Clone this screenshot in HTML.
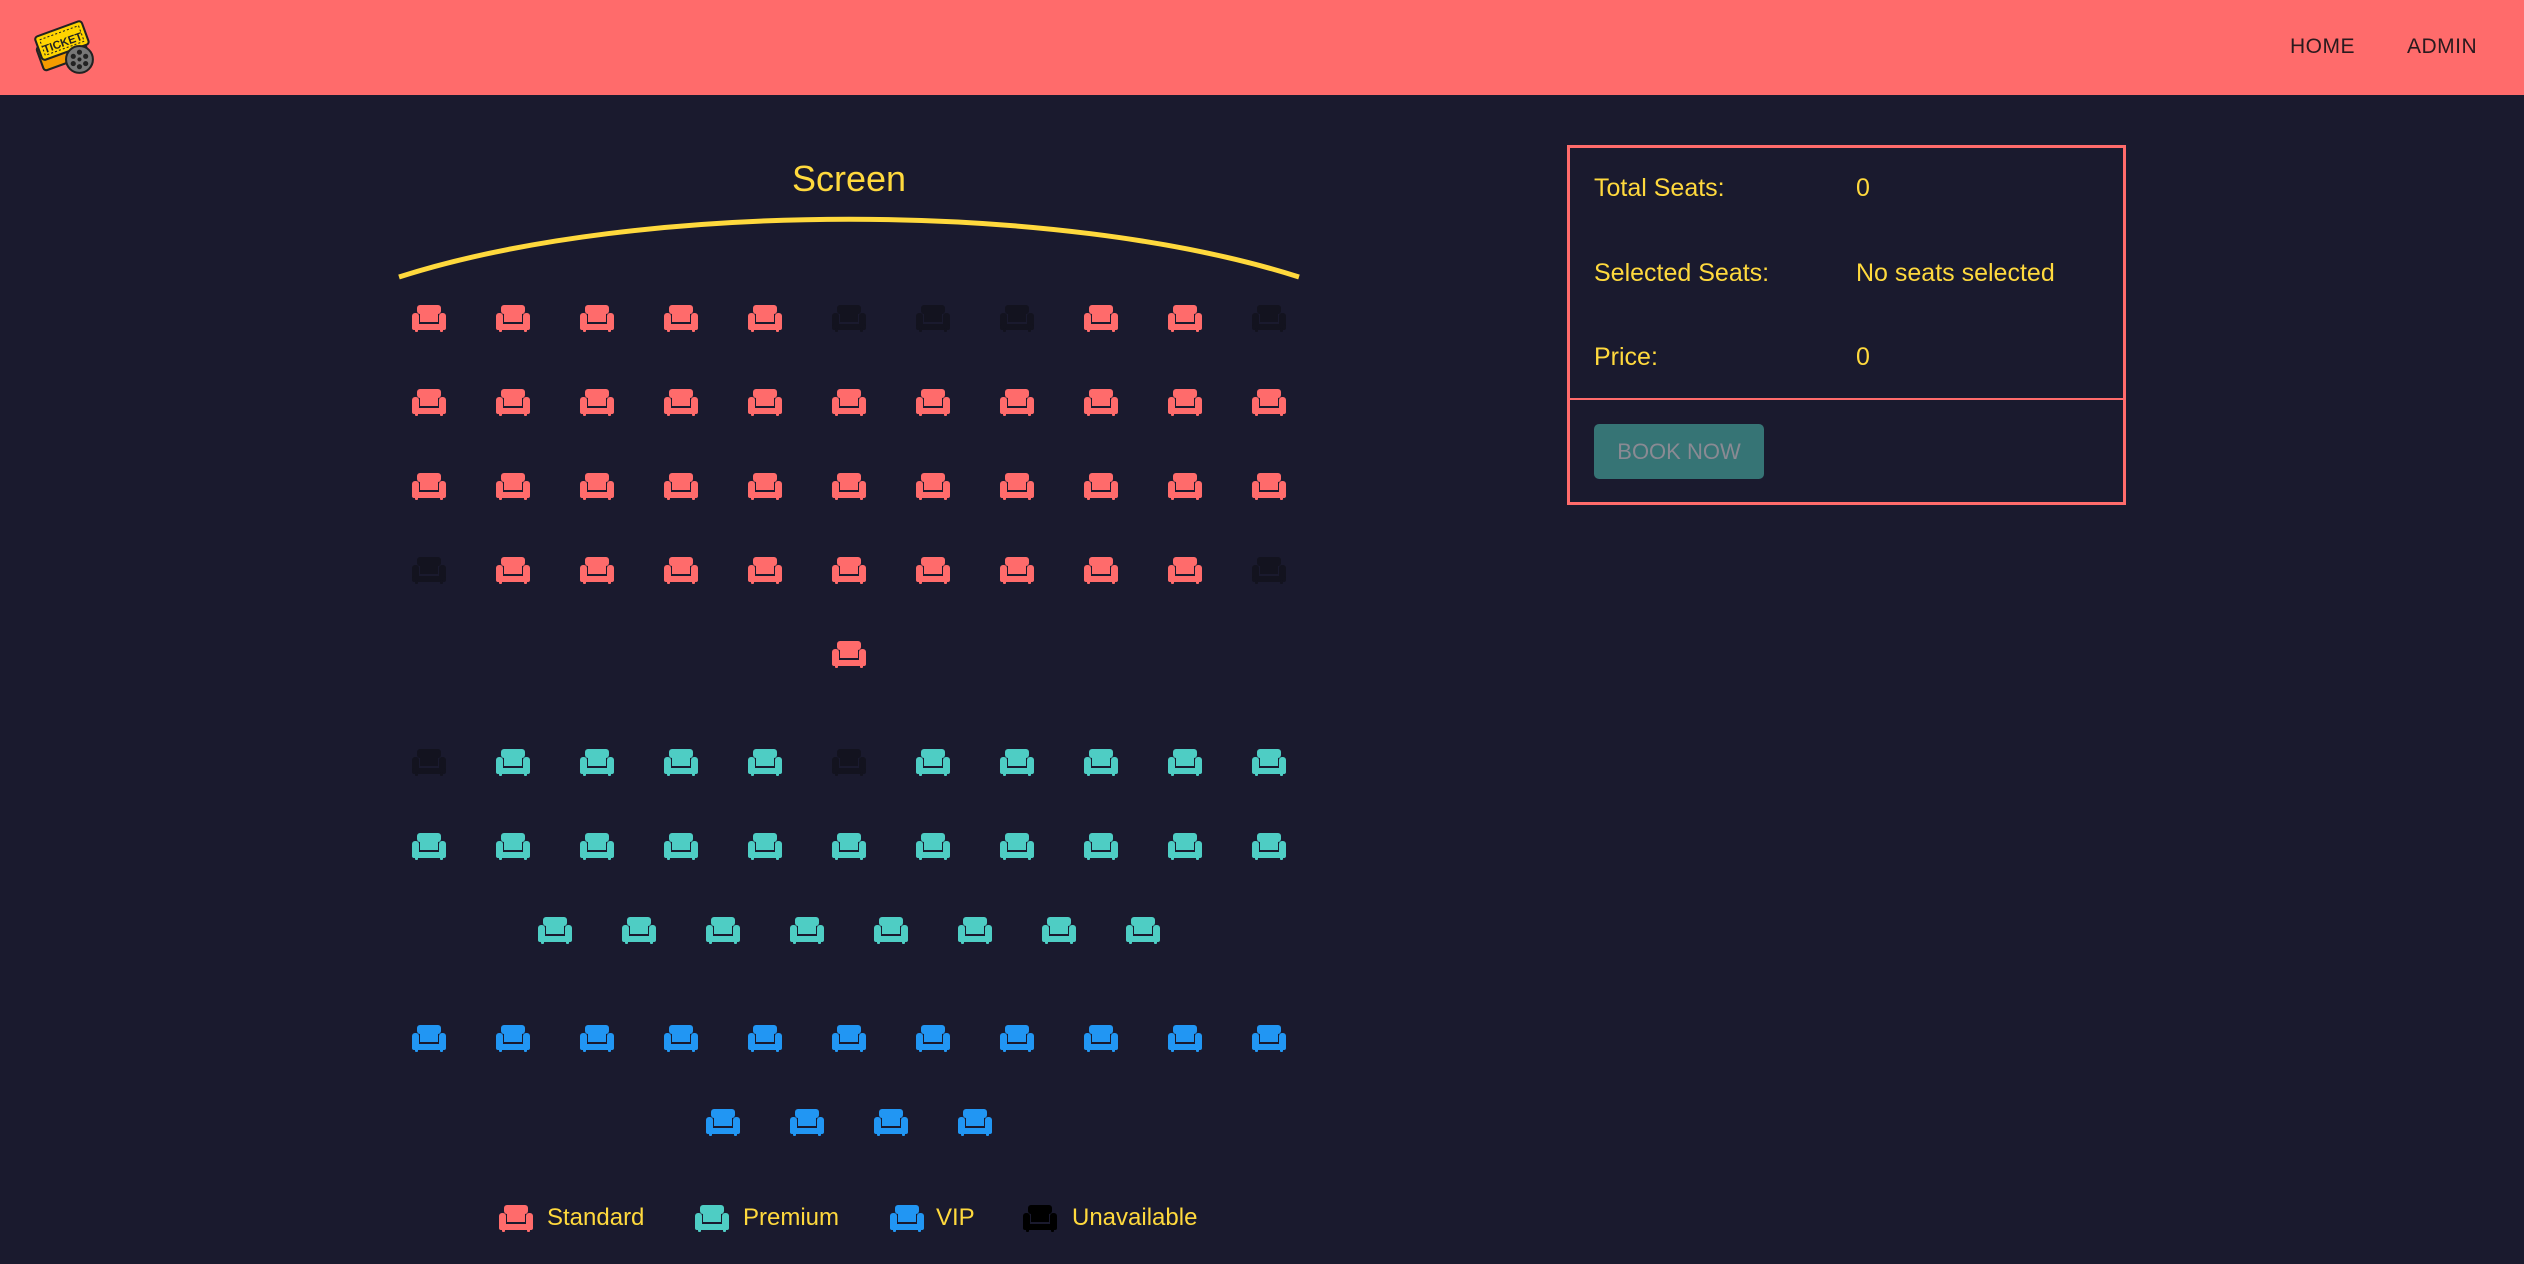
<!DOCTYPE html>
<html><head><meta charset="utf-8"><style>
*{margin:0;padding:0;box-sizing:border-box}
body{width:2524px;height:1264px;background:#1a1a2e;font-family:"Liberation Sans",Arial,sans-serif;position:relative;overflow:hidden}
.hdr{position:absolute;left:0;top:0;width:2524px;height:95px;background:#ff6b6b}
.nav{position:absolute;top:35px;font-size:21px;color:#2a1a1e;letter-spacing:0.5px}
.s{position:absolute;width:34px;height:27px}
.t{position:absolute;color:#ffd93d;font-size:24px;line-height:28px}
.p{font-size:25px}
.panel{position:absolute;left:1567px;top:145px;width:559px;height:360px;border:3px solid #ff6b6b}
.btn{position:absolute;left:1594px;top:424px;width:170px;height:55px;background:#367475;border-radius:5px;color:#8a8a93;font-size:22px;text-align:center;line-height:55px}
</style></head><body>
<svg width="0" height="0" style="position:absolute">
<symbol id="c" viewBox="0 0 34 27">
<rect x="5" y="0" width="24" height="9" rx="3"/>
<rect x="8" y="7" width="18" height="10"/>
<rect x="0" y="8" width="7" height="17" rx="3"/>
<rect x="27" y="8" width="7" height="17" rx="3"/>
<rect x="0" y="19" width="34" height="6" rx="2"/>
<rect x="3" y="23" width="3" height="4" rx="1"/>
<rect x="28" y="23" width="3" height="4" rx="1"/>
</symbol>
</svg>
<div class="hdr"></div>
<svg style="position:absolute;left:34px;top:15px" width="62" height="62" viewBox="0 0 60 60">
<g transform="rotate(-20 30 30)">
<rect x="3" y="22" width="46" height="24" rx="3" fill="#f59b00" stroke="#222" stroke-width="2"/>
<rect x="5" y="12" width="48" height="24" rx="3" fill="#ffd400" stroke="#222" stroke-width="2"/>
<rect x="9" y="16" width="40" height="16" fill="none" stroke="#222" stroke-width="1" stroke-dasharray="2 2"/>
<text x="29" y="30" font-size="11" font-weight="bold" text-anchor="middle" font-family="Liberation Sans" fill="#222">TICKET</text>
</g>
<circle cx="44" cy="43" r="13" fill="#777" stroke="#222" stroke-width="2"/>
<circle cx="44" cy="36" r="2.5" fill="#222"/><circle cx="44" cy="50" r="2.5" fill="#222"/>
<circle cx="38" cy="40" r="2.5" fill="#222"/><circle cx="50" cy="40" r="2.5" fill="#222"/>
<circle cx="38" cy="47" r="2.5" fill="#222"/><circle cx="50" cy="47" r="2.5" fill="#222"/>
<circle cx="44" cy="43" r="2" fill="#222"/>
</svg>
<div class="nav" style="left:2290px">HOME</div>
<div class="nav" style="left:2407px">ADMIN</div>

<div style="position:absolute;left:749px;top:158px;width:200px;text-align:center;color:#ffd93d;font-size:36px">Screen</div>
<svg style="position:absolute;left:390px;top:195px" width="920" height="90"><path d="M9 82 C250 5, 668 5, 909 82" fill="none" stroke="#ffd93d" stroke-width="5"/></svg>

<div id="seats"></div>
<script>
var R='#ff6b6b',T='#4ecdc4',B='#2196f3',U='#13131f';
var rows=[
[305,0,[R,R,R,R,R,U,U,U,R,R,U]],
[389,0,[R,R,R,R,R,R,R,R,R,R,R]],
[473,0,[R,R,R,R,R,R,R,R,R,R,R]],
[557,0,[U,R,R,R,R,R,R,R,R,R,U]],
[641,5,[R]],
[749,0,[U,T,T,T,T,U,T,T,T,T,T]],
[833,0,[T,T,T,T,T,T,T,T,T,T,T]],
[917,1.5,[T,T,T,T,T,T,T,T]],
[1025,0,[B,B,B,B,B,B,B,B,B,B,B]],
[1109,3.5,[B,B,B,B]]];
var h='';
rows.forEach(function(r){r[2].forEach(function(c,i){var x=412+84*(r[1]+i);
h+='<svg class="s" style="left:'+x+'px;top:'+r[0]+'px;fill:'+c+'"><use href="#c"/></svg>';});});
document.getElementById('seats').innerHTML=h;
</script>

<svg class="s" style="left:499px;top:1205px;fill:#ff6b6b"><use href="#c"/></svg>
<div class="t" style="left:547px;top:1204px">Standard</div>
<svg class="s" style="left:695px;top:1205px;fill:#4ecdc4"><use href="#c"/></svg>
<div class="t" style="left:743px;top:1204px">Premium</div>
<svg class="s" style="left:890px;top:1205px;fill:#2196f3"><use href="#c"/></svg>
<div class="t" style="left:936px;top:1204px">VIP</div>
<svg class="s" style="left:1023px;top:1205px;fill:#000"><use href="#c"/></svg>
<div class="t" style="left:1072px;top:1204px">Unavailable</div>

<div class="panel"></div>
<div style="position:absolute;left:1570px;top:398px;width:553px;height:2px;background:#ff6b6b"></div>
<div class="t p" style="left:1594px;top:174px">Total Seats:</div>
<div class="t p" style="left:1856px;top:174px">0</div>
<div class="t p" style="left:1594px;top:259px">Selected Seats:</div>
<div class="t p" style="left:1856px;top:259px">No seats selected</div>
<div class="t p" style="left:1594px;top:343px">Price:</div>
<div class="t p" style="left:1856px;top:343px">0</div>
<div class="btn">BOOK NOW</div>
</body></html>
